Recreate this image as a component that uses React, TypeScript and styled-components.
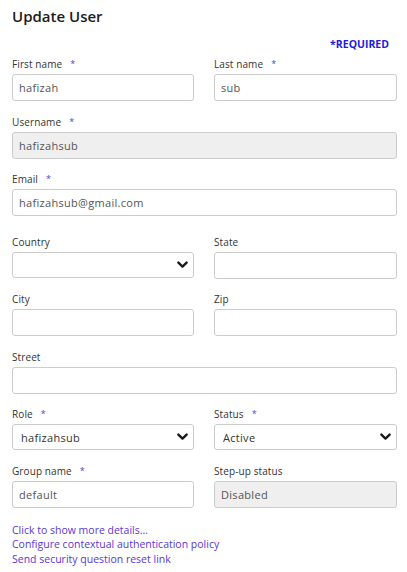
import React from "react";
import styled, { createGlobalStyle } from "styled-components";

const Global = createGlobalStyle`
  html, body { margin: 0; padding: 0; background: #fff; }
  body { font-family: "Open Sans", "Noto Sans", sans-serif; color: #333; }
  * { box-sizing: border-box; }
`;

const Page = styled.div`
  width: 407px;
  padding: 5px 10px 12px 12px;
`;

const Title = styled.h1`
  margin: 0;
  font-size: 15px;
  line-height: 22px;
  font-weight: 600;
  color: #1c1c1c;
`;

const Required = styled.div`
  text-align: right;
  padding-right: 8px;
  margin-top: 10px;
  font-size: 10.5px;
  line-height: 14px;
  font-weight: 700;
  color: #1e1ed6;
`;

const Grid = styled.div`
  display: grid;
  grid-template-columns: 182px 183px;
  column-gap: 20px;
  row-gap: 13.5px;
  margin-top: 6px;
`;

const Field = styled.div<{ $wide?: boolean; $extra?: number }>`
  display: flex;
  flex-direction: column;
  gap: 3px;
  grid-column: ${(p) => (p.$wide ? "1 / span 2" : "auto")};
  margin-bottom: ${(p) => p.$extra ?? 0}px;
`;

const Label = styled.label`
  font-size: 10px;
  line-height: 14px;
  color: #333;
  display: flex;
  align-items: center;
  letter-spacing: 0.1px;
`;

const Star = styled.span`
  color: #4a46d0;
  margin-left: 8px;
  font-size: 9px;
`;

const Input = styled.input<{ $disabled?: boolean }>`
  height: 27px;
  width: 100%;
  border: 1px solid #cccccc;
  border-radius: 3px;
  padding: 0 6px;
  font-family: inherit;
  font-size: 11px;
  letter-spacing: 0.3px;
  color: #555;
  background: ${(p) => (p.$disabled ? "#efefef" : "#fff")};
  outline: none;
`;

const SelectWrap = styled.div`
  position: relative;
  height: 26px;
`;

const Select = styled.select`
  appearance: none;
  -webkit-appearance: none;
  width: 100%;
  height: 100%;
  border: 1px solid #cccccc;
  border-radius: 3px;
  padding: 0 8px;
  font-family: inherit;
  font-size: 11px;
  letter-spacing: 0.3px;
  color: #333;
  background: #fff;
  outline: none;
`;

const Chevron = styled.svg`
  position: absolute;
  right: 6px;
  top: 50%;
  transform: translateY(-50%);
  pointer-events: none;
`;

const Links = styled.div`
  display: flex;
  flex-direction: column;
  margin-top: 15px;
`;

const Link = styled.a`
  font-size: 10.5px;
  line-height: 14.5px;
  color: #5a37d6;
  text-decoration: none;
`;

function SelectBox({ value }: { value?: string }) {
  return (
    <SelectWrap>
      <Select defaultValue={value ?? ""}>
        <option value={value ?? ""}>{value ?? ""}</option>
      </Select>
      <Chevron width="11" height="8" viewBox="0 0 11 8">
        <path d="M1.4 1.6 L5.5 5.6 L9.6 1.6" fill="none" stroke="#1a1a1a" strokeWidth="2.4" strokeLinecap="round" strokeLinejoin="round" />
      </Chevron>
    </SelectWrap>
  );
}

function FieldLabel({ text, req }: { text: string; req?: boolean }) {
  return (
    <Label>
      {text}
      {req && <Star>*</Star>}
    </Label>
  );
}

export default function App() {
  return (
    <Page>
      <Global />
      <Title>Update User</Title>
      <Required>*REQUIRED</Required>
      <Grid>
        <Field>
          <FieldLabel text="First name" req />
          <Input defaultValue="hafizah" />
        </Field>
        <Field>
          <FieldLabel text="Last name" req />
          <Input defaultValue="sub" />
        </Field>
        <Field $wide>
          <FieldLabel text="Username" req />
          <Input $disabled readOnly defaultValue="hafizahsub" />
        </Field>
        <Field $wide $extra={5}>
          <FieldLabel text="Email" req />
          <Input defaultValue="hafizahsub@gmail.com" />
        </Field>
        <Field>
          <FieldLabel text="Country" />
          <SelectBox />
        </Field>
        <Field>
          <FieldLabel text="State" />
          <Input />
        </Field>
        <Field>
          <FieldLabel text="City" />
          <Input />
        </Field>
        <Field>
          <FieldLabel text="Zip" />
          <Input />
        </Field>
        <Field $wide>
          <FieldLabel text="Street" />
          <Input />
        </Field>
        <Field>
          <FieldLabel text="Role" req />
          <SelectBox value="hafizahsub" />
        </Field>
        <Field>
          <FieldLabel text="Status" req />
          <SelectBox value="Active" />
        </Field>
        <Field>
          <FieldLabel text="Group name" req />
          <Input defaultValue="default" />
        </Field>
        <Field>
          <FieldLabel text="Step-up status" />
          <Input $disabled readOnly defaultValue="Disabled" />
        </Field>
      </Grid>
      <Links>
        <Link href="#">Click to show more details...</Link>
        <Link href="#">Configure contextual authentication policy</Link>
        <Link href="#">Send security question reset link</Link>
      </Links>
    </Page>
  );
}
